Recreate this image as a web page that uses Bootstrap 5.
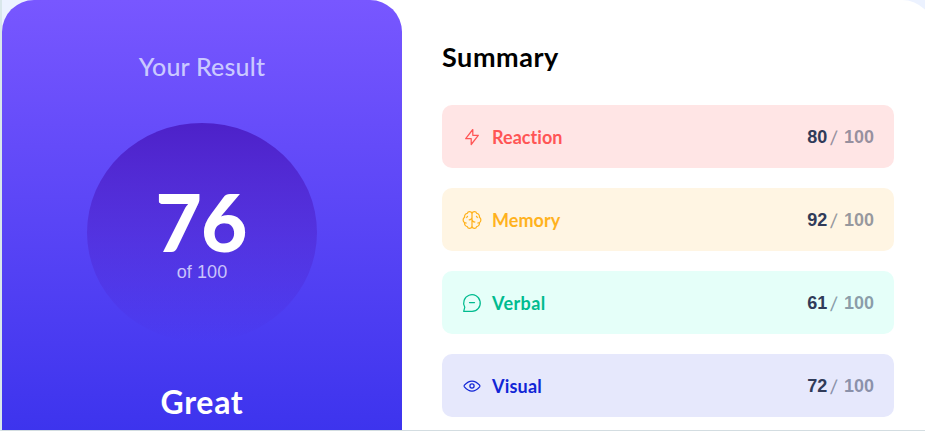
<!DOCTYPE html>
<html lang="en">
<head>
<meta charset="utf-8">
<meta name="viewport" content="width=device-width, initial-scale=1">
<title>Results summary</title>
<link href="https://cdn.jsdelivr.net/npm/bootstrap@5.3.0/dist/css/bootstrap.min.css" rel="stylesheet">
<style>
html,body{height:100%;overflow:hidden}
body{background:#ecf2ff;font-family:Lato,"Liberation Sans",sans-serif;color:#000;font-variant-ligatures:none}
.stage{height:431px;border-left:2px solid #d9e7eb;border-bottom:1px solid #d3dde1}
.result-card{width:932px;height:540px;border-radius:32px}
.result-side{width:400px;border-radius:32px;padding-top:50px;background:linear-gradient(#7857ff,#2e2be9)}
.side-title{font-size:25px;line-height:32px;font-weight:500;color:#cac9ff;letter-spacing:.2px}
.score{width:230px;height:219px;border-radius:50%;margin-top:41px;padding-top:58px;background:linear-gradient(#4d21c9,rgba(37,33,201,0))}
.score-value{font-size:80px;line-height:80px;font-weight:900;letter-spacing:-1px;margin-left:-2px}
.score-total{font:18px/20px "Liberation Sans",sans-serif;color:#c9c3fb;letter-spacing:.1px;margin-top:1px}
.verdict{font-size:32px;line-height:40px;font-weight:700;margin-top:40px;letter-spacing:.7px}
.summary-side{padding:37px 40px 0}
.summary-title{font-size:27px;line-height:40px;font-weight:700;margin-bottom:28px;letter-spacing:.55px}
.stat-list{gap:20px}
.stat{height:63px;border-radius:10px;padding:0 20px;gap:10px}
.stat svg{width:20px;height:20px}
.stat-name{font-size:18px;font-weight:700;line-height:24px;letter-spacing:.05px}
.verbal .stat-name{letter-spacing:.4px}
.visual .stat-name{letter-spacing:.2px}
.stat-score{font:bold 18px/24px "Liberation Sans",sans-serif;color:#303b59}
.stat-score .out-of{color:rgba(48,59,89,.5)}
.stat-score .slash{display:inline-block;font-weight:400;font-size:20px;line-height:20px;vertical-align:-2px;transform:skewX(-8deg);margin:0 7px 0 4px}
.reaction{background:#ffe5e5;color:#f55}
.memory{background:#fff5e3;color:#ffb21e}
.verbal{background:#e5fff9;color:#00bb8f}
.visual{background:#e6e8fc;color:#1125d6}
</style>
</head>
<body>
<main class="stage overflow-hidden">
<div class="result-card d-flex bg-white">
<section class="result-side d-flex flex-column align-items-center flex-shrink-0 text-white">
<h1 class="side-title m-0">Your Result</h1>
<div class="score d-flex flex-column align-items-center flex-shrink-0">
<div class="score-value">76</div>
<div class="score-total">of 100</div>
</div>
<div class="verdict">Great</div>
</section>
<section class="summary-side flex-grow-1">
<h2 class="summary-title mt-0">Summary</h2>
<div class="stat-list d-grid">
<div class="stat reaction d-flex align-items-center">
<svg viewBox="0 0 20 20" fill="none" stroke="currentColor" stroke-width="1.25" stroke-linejoin="round"><path d="M10.8 8.3V2.5L3.7 11.7h5.5v5.8l7.1-9.2z"/></svg>
<span class="stat-name">Reaction</span><div class="stat-score ms-auto">80<span class="out-of"><span class="slash">/</span>100</span></div></div>
<div class="stat memory d-flex align-items-center">
<svg viewBox="0 0 20 20" fill="none" stroke="currentColor" stroke-width="1.25" stroke-linecap="round" stroke-linejoin="round"><path d="M10 3.9A2.4 2.4 0 0 0 5.3 3.4 3.2 3.2 0 0 0 2.6 7.3 3.2 3.2 0 0 0 2.6 12.7 3.2 3.2 0 0 0 5.3 16.6 2.4 2.4 0 0 0 10 16.1zA2.4 2.4 0 0 1 14.7 3.4 3.2 3.2 0 0 1 17.4 7.3 3.2 3.2 0 0 1 17.4 12.7 3.2 3.2 0 0 1 14.7 16.6 2.4 2.4 0 0 1 10 16.1M10 9.7a2.8 2.8 0 0 0 2.8 2.3M10 7.500a2.800 2.800 0 0 1-2.800 2.300M2.600 12.700l1.600.3M17.400 12.700l-1.600.3M5.500 6.300l-.8 1.200M14.500 6.300l.8 1.200"/></svg>
<span class="stat-name">Memory</span><div class="stat-score ms-auto">92<span class="out-of"><span class="slash">/</span>100</span></div></div>
<div class="stat verbal d-flex align-items-center">
<svg viewBox="0 0 20 20" fill="none" stroke="currentColor" stroke-width="1.25" stroke-linecap="round" stroke-linejoin="round"><path d="M7.5 9.5h5M10 18.3A8.3 8.3 0 1 0 2.8 14.2L1.7 18.3z"/></svg>
<span class="stat-name">Verbal</span><div class="stat-score ms-auto">61<span class="out-of"><span class="slash">/</span>100</span></div></div>
<div class="stat visual d-flex align-items-center">
<svg viewBox="0 0 20 20" fill="none" stroke="currentColor" stroke-width="1.25" stroke-linejoin="round"><path d="M10 12.1a2.1 2.1 0 1 0 0-4.2 2.1 2.1 0 0 0 0 4.2z"/><path d="M17.6 9.2c.4.5.4 1.1 0 1.6-1.3 1.5-4.2 4.2-7.6 4.2s-6.3-2.7-7.6-4.2c-.4-.5-.4-1.1 0-1.6C3.7 7.7 6.6 5 10 5s6.3 2.7 7.6 4.2z"/></svg>
<span class="stat-name">Visual</span><div class="stat-score ms-auto">72<span class="out-of"><span class="slash">/</span>100</span></div></div>
</div>
</section>
</div>
</main>
<script src="https://cdn.jsdelivr.net/npm/bootstrap@5.3.0/dist/js/bootstrap.bundle.min.js"></script>
</body>
</html>
